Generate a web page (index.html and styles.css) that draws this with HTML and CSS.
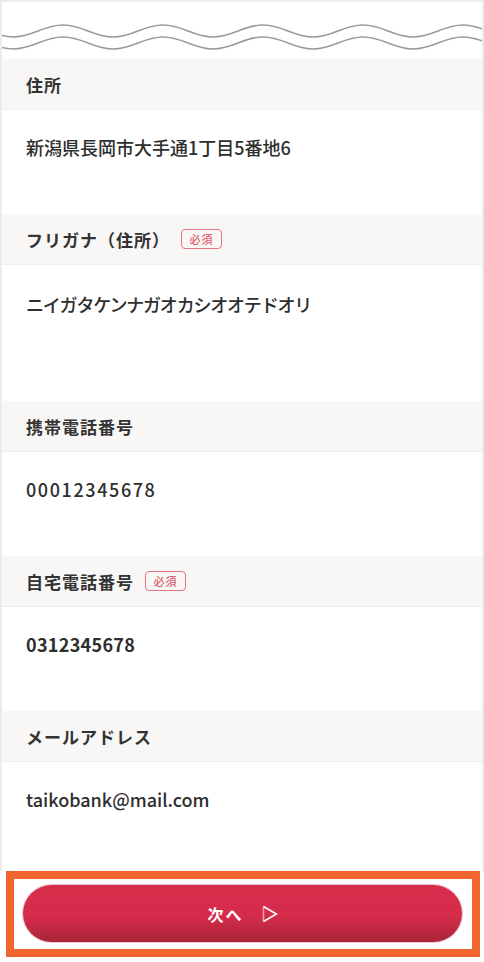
FILE: index.html
```html
<!DOCTYPE html>
<html lang="ja">
<head>
<meta charset="utf-8">
<title>入力内容</title>
<link rel="stylesheet" href="styles.css">
</head>
<body>
<div class="page">
  <svg class="wave" width="480" height="57" viewBox="0 0 480 57" aria-hidden="true">
    <path d="M-39 23 C-19 23 -9 35 11 35 S41 23 61 23 S91 35 111 35 S141 23 161 23 S191 35 211 35 S241 23 261 23 S291 35 311 35 S341 23 361 23 S391 35 411 35 S441 23 461 23 S491 35 511 35" fill="none" stroke="#9a9a9a" stroke-width="1.5"/>
    <path d="M-39 35 C-19 35 -9 47 11 47 S41 35 61 35 S91 47 111 47 S141 35 161 35 S191 47 211 47 S241 35 261 35 S291 47 311 47 S341 35 361 35 S391 47 411 47 S441 35 461 35 S491 47 511 47" fill="none" stroke="#9a9a9a" stroke-width="1.5"/>
  </svg>

  <div class="row-head"><span class="label">住所</span></div>
  <div class="row-body">新潟県長岡市大手通1丁目5番地6</div>

  <div class="row-head"><span class="label">フリガナ（住所）</span><span class="badge">必須</span></div>
  <div class="row-body row-body--tall row-body--kana">ニイガタケンナガオカシオオテドオリ</div>

  <div class="row-head"><span class="label">携帯電話番号</span></div>
  <div class="row-body row-body--spaced">00012345678</div>

  <div class="row-head"><span class="label">自宅電話番号</span><span class="badge">必須</span></div>
  <div class="row-body row-body--strong">0312345678</div>

  <div class="row-head"><span class="label">メールアドレス</span></div>
  <div class="row-body">taikobank@mail.com</div>
</div>

<div class="footer">
  <div class="highlight">
    <button class="next-btn" type="button">
      <span class="next-text">次へ</span>
      <svg class="next-icon" width="16" height="18" viewBox="0 0 16 18" aria-hidden="true">
        <path d="M1.5 1.5 L1.5 16.5" stroke="rgba(255,255,255,0.55)" stroke-width="1.6" fill="none"/>
        <path d="M1.5 1.5 L14.5 9 L1.5 16.5" stroke="#ffffff" stroke-width="1.6" fill="none" stroke-linejoin="miter"/>
      </svg>
    </button>
  </div>
</div>
</body>
</html>
```

FILE: styles.css
```css
* {
  box-sizing: border-box;
}

html, body {
  margin: 0;
  padding: 0;
  background: #ffffff;
}

body {
  width: 484px;
  font-family: "Noto Sans CJK JP", "Noto Sans", sans-serif;
  color: #333333;
}

.page {
  border: 2px solid #ececec;
  border-bottom: none;
  padding-bottom: 5px;
  background: #ffffff;
}

.wave {
  display: block;
}

.row-head {
  height: 51px;
  display: flex;
  align-items: center;
  padding: 0 24px;
  background: #f8f7f5;
  border-bottom: 1px solid #eeeeee;
}

.label {
  font-size: 17px;
  font-weight: 700;
  letter-spacing: 1px;
  color: #333333;
}

.badge {
  margin-left: 11px;
  width: 41px;
  height: 20px;
  border: 1.5px solid #e77684;
  border-radius: 4px;
  color: #e0606f;
  font-size: 11px;
  font-weight: 500;
  letter-spacing: 1px;
  display: flex;
  align-items: center;
  justify-content: center;
  line-height: 1;
}

.row-body {
  height: 104px;
  padding: 24px 24px 0;
  font-size: 18px;
  font-weight: 500;
  line-height: 27px;
  color: #2e2e2e;
}

.row-body--tall {
  height: 136px;
  padding-top: 26px;
}

.row-body--kana {
  letter-spacing: -1.2px;
}

.row-body--spaced {
  letter-spacing: 1.6px;
}

.row-body--strong {
  letter-spacing: 0.3px;
  font-weight: 600;
}

.footer {
  padding: 0 4px 5px 6px;
  background: #ffffff;
}

.highlight {
  border: 8px solid #f06530;
  padding: 6px 10px 7px 9px;
  background: #ffffff;
}

.next-btn {
  width: 100%;
  height: 57px;
  border: none;
  border-radius: 29px;
  background: linear-gradient(to bottom, #d62d4b 0%, #d42c4a 55%, #a92536 100%);
  box-shadow: 0 0 0 1px rgba(214, 80, 105, 0.35);
  display: flex;
  align-items: center;
  justify-content: center;
  gap: 18px;
  padding: 0;
  font-family: "Noto Sans CJK JP", "Noto Sans", sans-serif;
  cursor: pointer;
}

.next-text {
  color: #ffffff;
  font-size: 16px;
  font-weight: 700;
  letter-spacing: 2px;
}

.next-icon {
  display: block;
}
```
